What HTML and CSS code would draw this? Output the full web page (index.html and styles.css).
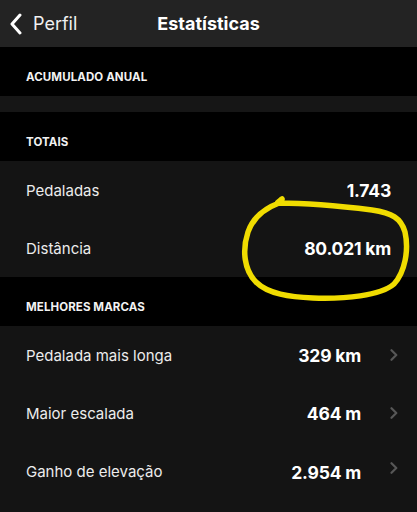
FILE: index.html
```html
<!DOCTYPE html>
<html lang="pt">
<head>
<meta charset="utf-8">
<link rel="stylesheet" href="styles.css">
</head>
<body>
<div class="screen">
  <header class="nav">
    <div class="back">
      <svg class="back-icon" width="14" height="22" viewBox="0 0 14 22"><path d="M11 2 L3 11 L11 20" fill="none" stroke="#fff" stroke-width="3" stroke-linecap="round" stroke-linejoin="round"/></svg>
      <span>Perfil</span>
    </div>
    <h1 class="title">Estatísticas</h1>
  </header>

  <div class="section-head">ACUMULADO ANUAL</div>
  <div class="spacer"></div>

  <div class="section-head">TOTAIS</div>
  <div class="row"><span class="label">Pedaladas</span><span class="value">1.743</span></div>
  <div class="row"><span class="label">Distância</span><span class="value">80.021 km</span></div>

  <div class="section-head">MELHORES MARCAS</div>
  <div class="row link"><span class="label">Pedalada mais longa</span><span class="value">329 km</span><svg class="chev" width="8" height="12" viewBox="0 0 8 12"><path d="M1.5 1.2 L6.3 6 L1.5 10.8" fill="none" stroke="#575757" stroke-width="2.2" stroke-linecap="round" stroke-linejoin="round"/></svg></div>
  <div class="row link"><span class="label">Maior escalada</span><span class="value">464 m</span><svg class="chev" width="8" height="12" viewBox="0 0 8 12"><path d="M1.5 1.2 L6.3 6 L1.5 10.8" fill="none" stroke="#575757" stroke-width="2.2" stroke-linecap="round" stroke-linejoin="round"/></svg></div>
  <div class="row link fill"><span class="label">Ganho de elevação</span><span class="value">2.954 m</span><svg class="chev" width="8" height="12" viewBox="0 0 8 12"><path d="M1.5 1.2 L6.3 6 L1.5 10.8" fill="none" stroke="#575757" stroke-width="2.2" stroke-linecap="round" stroke-linejoin="round"/></svg></div>

  <svg class="scribble" width="417" height="512" viewBox="0 0 417 512">
    <path d="M282 199 C278 202 276 203 279 203 C300 203 340 206 372 210 C392 213 401 218 405 232 C409 250 405 272 394 284 C380 296 345 299 313 298 C290 297 268 294 256 282 C244 270 242 250 248 232 C253 218 263 209 279 203"
      fill="none" stroke="#f0dc00" stroke-width="5.5" stroke-linecap="round" stroke-linejoin="round"/>
  </svg>
</div>
</body>
</html>
```
FILE: styles.css
```css
* { box-sizing: border-box; margin: 0; padding: 0; }
html, body { background: #000; }
body { width: 417px; height: 512px; overflow: hidden; font-family: "Inter", "Liberation Sans", sans-serif; color: #fff; }
.screen { position: relative; width: 417px; height: 512px; display: flex; flex-direction: column; }
.nav { height: 47px; background: #232323; display: flex; align-items: center; position: relative; flex-shrink: 0; }
.back { display: flex; align-items: center; gap: 10px; padding-left: 9px; font-size: 18px; color: #f0f0f0; }
.back span { margin-top: -1px; }
.title { position: absolute; left: 0; right: 0; text-align: center; font-size: 18px; font-weight: 700; pointer-events: none; }
.section-head { height: 49px; background: #000; display: flex; align-items: flex-end; padding: 0 26px 12px; font-size: 11.5px; font-weight: 700; letter-spacing: 0.1px; color: #f2f2f2; flex-shrink: 0; }
.spacer { height: 16px; background: #161616; flex-shrink: 0; }
.row { height: 58px; background: #141414; display: flex; align-items: center; padding: 0 26px; font-size: 15px; flex-shrink: 0; }
.label { flex: 1; color: #ececec; }
.value { font-weight: 700; font-size: 17.5px; color: #fff; letter-spacing: -0.2px; }
.row.link { padding-right: 19px; }
.row.link .value { margin-right: 29px; }
.chev { display: block; }
.row.fill { flex: 1; align-items: flex-start; padding-top: 20px; }
.scribble { position: absolute; left: 0; top: 0; pointer-events: none; }
```
